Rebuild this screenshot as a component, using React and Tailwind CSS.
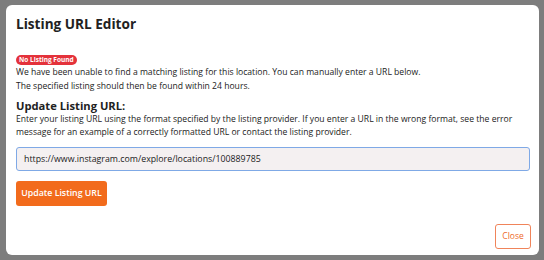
import React from 'react';

function App() {
    return (
        <div className="w-[544px] h-[260px] bg-[#7d7d7d] pt-[5px] pl-[6px]" style={{ fontFamily: '"Open Sans", sans-serif' }}>
            <div className="w-[533px] h-[250px] bg-white rounded-[6px] flex flex-col pl-[10px] pr-[8px]">
                <h1 className="text-[13.6px] font-bold text-[#222] mt-[9px] leading-[20px]">Listing URL Editor</h1>
                <div className="mt-[21px] flex">
                    <span className="bg-[#e4323b] text-white text-[6.5px] font-bold leading-[10px] px-[3px] rounded-full">No Listing Found</span>
                </div>
                <p className="text-[8.6px] text-[#222] leading-[14px]">
                    We have been unable to find a matching listing for this location. You can manually enter a URL below.<br />
                    The specified listing should then be found within 24 hours.
                </p>
                <h2 className="text-[11.2px] font-bold text-[#222] leading-[15px] mt-[5px]">Update Listing URL:</h2>
                <p className="text-[8.6px] text-[#222] leading-[13px]">
                    Enter your listing URL using the format specified by the listing provider. If you enter a URL in the wrong format, see the error message for an example of a correctly formatted URL or contact the listing provider.
                </p>
                <input
                    type="text"
                    defaultValue="https://www.instagram.com/explore/locations/100889785"
                    className="mt-[8px] h-[24px] w-[514px] border border-[#7fa9e6] rounded-[3px] bg-[#f4f0f1] px-[7px] text-[8.8px] text-[#222] outline-none"
                />
                <div className="mt-[10px] flex">
                    <button className="bg-[#f26b1c] text-white text-[8.8px] font-semibold h-[25px] w-[91px] rounded-[3px]">Update Listing URL</button>
                </div>
                <div className="flex justify-end mt-auto mb-[6px]">
                    <button className="border border-[#f0845a] text-[#ee6a2a] text-[8.5px] h-[25px] w-[36px] rounded-[3px] bg-white">Close</button>
                </div>
            </div>
        </div>
    );
}

export default App;
